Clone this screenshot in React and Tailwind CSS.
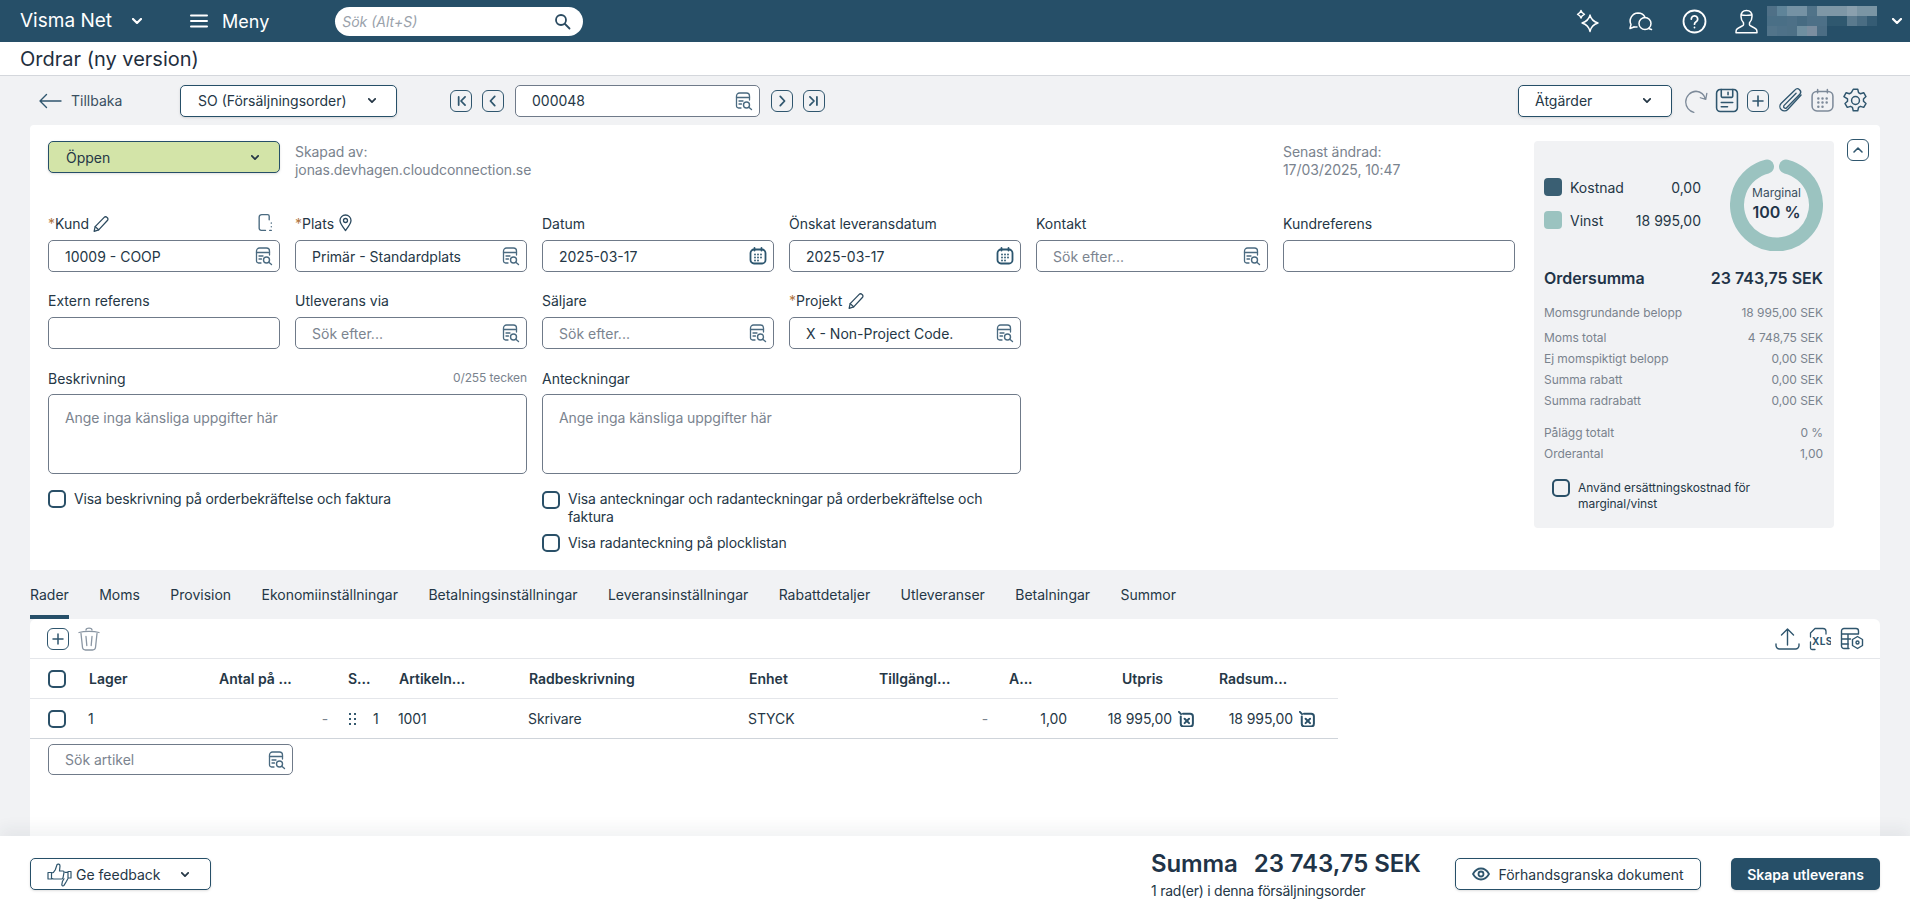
import React from "react";

const Svg = ({ w, h, box, className = "", children }) => (
  <svg
    width={w}
    height={h}
    viewBox={box}
    fill="none"
    stroke="currentColor"
    strokeWidth="1.5"
    strokeLinecap="round"
    strokeLinejoin="round"
    className={"shrink-0 " + className}
  >
    {children}
  </svg>
);

const Chevron = ({ className = "", w = 8, h = 5 }) => (
  <Svg w={w} h={h} box="0 0 10 6" className={className}>
    <path d="M1 1l4 4 4-4" strokeWidth="2.200" />
  </Svg>
);

const Lookup = () => (
  <Svg w={18} h={20} box="0 0 18 20" className="text-[#4a6a80]">
    <path d="M6 17H3.500A2 2 0 0 1 1.500 15V5a3 3 0 0 1 3-3h7a3 3 0 0 1 3 3v4" strokeWidth="1.300" />
    <path d="M1.500 6.500h13M4 10h4M4 13h2.500" strokeWidth="1.300" />
    <circle cx="11.500" cy="14" r="3" strokeWidth="1.400" />
    <path d="M13.800 16.300l2.700 2.200" strokeWidth="1.400" />
  </Svg>
);

const Calendar = ({ size = 18, stroke = "1.800", className = "text-[#2c566f]" }) => (
  <Svg w={size} h={size} box="0 0 18 18" className={className}>
    <rect x="1.500" y="2.500" width="15" height="14" rx="3.500" strokeWidth={stroke} />
    <path d="M5.500 1v2.500M12.500 1v2.500" strokeWidth={stroke} />
    <path d="M6 7.500h.01M9 7.500h.01M12 7.500h.01M6 10.500h.01M9 10.500h.01M12 10.500h.01M6 13.500h.01M9 13.500h.01" strokeWidth="1.800" />
  </Svg>
);

const Pencil = () => (
  <Svg w={18} h={18} box="0 0 16 17" className="text-[#2c4a5f]">
    <path d="M1.500 15.500l1-4.500L11 2.200a1.800 1.800 0 0 1 2.600 0l.4.400a1.800 1.800 0 0 1 0 2.600L5.800 14z" strokeWidth="1.200" />
    <path d="M2.500 11l3.300 3" strokeWidth="1.200" />
  </Svg>
);

const Check = () => (
  <span className="block w-[18px] h-[18px] shrink-0 rounded-[5px] border-2 border-[#2a5068] bg-white"></span>
);

const PanelCheck = () => (
  <span className="block w-[18px] h-[18px] shrink-0 rounded-[5px] border-2 border-[#2a5068]"></span>
);

const Field = ({ label, value, placeholder, icon = "lookup", right }) => (
  <div>
    <div className="h-5 mb-[6px] flex items-center text-[14px] text-[#253746] leading-5">
      {label}
      {right}
    </div>
    <Input value={value} placeholder={placeholder} icon={icon} />
  </div>
);

const Input = ({ value, placeholder, icon = "lookup" }) => (
  <div className="h-8 rounded-[5px] border border-[#6f7a89] bg-white pl-4 pr-[6px] flex items-center justify-between text-[14px]">
    {value ? (
      <span className="text-[#253746]">{value}</span>
    ) : (
      <span className="text-[#7b848f]">{placeholder}</span>
    )}
    {icon === "lookup" && <Lookup />}
    {icon === "date" && <Calendar />}
  </div>
);

const Req = () => <span className="text-[#b0743f]">*</span>;

const NavBtn = ({ d, className = "" }) => (
  <span className={"w-[22px] h-[22px] rounded-[6px] border-[1.5px] border-[#2f566e] flex items-center justify-center text-[#2f566e] " + className}>
    <svg width="14" height="14" viewBox="0 0 12 12" fill="none" stroke="currentColor" strokeWidth="1.500" strokeLinecap="round" strokeLinejoin="round">
      <path d={d} />
    </svg>
  </span>
);

const blurRows = [
  ["bg-[#4f7087]", "bg-[#5f8499]", "bg-[#7592a4]", "bg-[#7592a4]", "bg-[#507389]", "bg-[#7e97a6]", "bg-[#7e97a6]", "bg-[#7e97a6]", "bg-[#8aa0ae]", "bg-[#7a95a4]", "bg-[#7a95a4]"],
  ["bg-[#4a6f86]", "bg-[#4a6f86]", "bg-[#4d7087]", "bg-[#466b82]", "bg-[#4d7087]", "bg-[#4d7087]", "bg-[#2f586f]", "bg-[#2f586f]", "bg-[#5a7a8e]", "bg-[#4a6d83]", "bg-[#355c74]"],
  ["bg-[#52748a]", "bg-[#4e7188]", "bg-[#4d7086]", "bg-[#6f8fa0]", "bg-[#7b8ea0]", "bg-[#4b6d84]"],
];

const tabs = [
  "Moms",
  "Provision",
  "Ekonomiinställningar",
  "Betalningsinställningar",
  "Leveransinställningar",
  "Rabattdetaljer",
  "Utleveranser",
  "Betalningar",
  "Summor",
];

const totals = [
  ["Moms total", "4 748,75 SEK"],
  ["Ej momspiktigt belopp", "0,00 SEK"],
  ["Summa rabatt", "0,00 SEK"],
  ["Summa radrabatt", "0,00 SEK"],
];

const tableCols = "grid grid-cols-[59px_130px_129px_51px_130px_220px_130px_130px_81px_129px_119px] w-[1308px]";

const PriceIcon = () => (
  <Svg w={16} h={16} box="1 1 14.500 14.500" className="text-[#2a5068] ml-[6px]">
    <path d="M5.500 3.500h6.500a2.500 2.500 0 0 1 2.500 2.500v6.500a2.500 2.500 0 0 1-2.500 2.500H6a2.500 2.500 0 0 1-2.500-2.500V6" strokeWidth="1.800" />
    <path d="M1.800 1.800l2 2M7 8l4 4M11 8l-4 4" strokeWidth="1.800" />
  </Svg>
);

export default function App() {
  return (
    <div className="w-[1910px] h-[912px] overflow-hidden flex flex-col bg-[#f1f2f4] font-[Inter,sans-serif] text-[#253746]">
      {/* header */}
      <div className="h-[42px] shrink-0 bg-[#264f68] text-white flex items-center pl-5">
        <span className="text-[19px] w-[95px]">Visma Net</span>
        <Chevron className="ml-[17px]" w={10} h={6} />
        <Svg w={18} h={14} box="0 0 18 14" className="ml-[48px]">
          <path d="M1 1.500h16M1 7h16M1 12.500h16" strokeWidth="2" />
        </Svg>
        <span className="text-[18px] ml-[14px]">Meny</span>
        <div className="ml-[66px] w-[248px] h-[29px] rounded-full bg-white pl-[7px] pr-[12px] flex items-center justify-between">
          <span className="italic text-[14px] text-[#9aa2ab]">Sök (Alt+S)</span>
          <Svg w={17} h={17} box="0 0 17 17" className="text-[#2a4a60]">
            <circle cx="7" cy="7" r="5" strokeWidth="1.800" />
            <path d="M11 11l4.500 4.500" strokeWidth="1.800" />
          </Svg>
        </div>

        <div className="ml-auto flex items-center">
          <Svg w={24} h={24} box="0 0 24 24">
            <path d="M14 6c1 4.500 3 6.500 8 8-5 1.500-7 3.500-8 8.500-1-5-3-7-8-8.500 5-1.500 7-3.500 8-8z" strokeWidth="1.400" />
            <path d="M5 1.500c.5 2 1.200 3 3.500 3.800C6.200 6 5.500 7 5 9c-.5-2-1.200-3-3.500-3.700C3.800 4.500 4.500 3.500 5 1.500z" strokeWidth="1.400" />
          </Svg>
          <Svg w={25} h={24} box="0 0 25 24" className="ml-[28px]">
            <path d="M6 18l-4 1.500 1-4A8 8 0 0 1 10 4c3.500 0 6 1.800 7 4.500" strokeWidth="1.500" />
            <path d="M6 18h3" strokeWidth="1.500" />
            <circle cx="17" cy="14.500" r="6" strokeWidth="1.500" />
            <path d="M20.500 19.500l3 1" strokeWidth="1.500" />
          </Svg>
          <Svg w={25} h={25} box="0 0 25 25" className="ml-[29px]">
            <circle cx="12.500" cy="12.500" r="11" strokeWidth="1.800" />
            <path d="M9.300 10a3.200 3.200 0 1 1 4.800 2.800c-1.100.700-1.600 1.300-1.600 2.400M12.500 18.500v.100" strokeWidth="1.800" />
          </Svg>
          <Svg w={23} h={25} box="0 0 23 25" className="ml-[28px]">
            <path d="M11.500 1.500c3.500 0 5.500 2.500 5.500 6 0 2.800-1.200 5-2.500 6.300v2.200c0 1 5 2 7 4.500.5 1 .5 2 .5 3.200H1c0-1.200 0-2.200.5-3.200 2-2.500 7-3.500 7-4.500v-2.200C7.200 12.500 6 10.300 6 7.500c0-3.500 2-6 5.500-6z" strokeWidth="1.500" />
            <path d="M6.500 6c2.500.5 6.500.5 10 0" strokeWidth="1.300" />
          </Svg>
          <div className="ml-[9px] w-[113px] h-[30px] flex flex-col">
            {blurRows.map((row, i) => (
              <div key={i} className="flex h-[10px]">
                {row.map((c, j) => (
                  <span key={j} className={"block w-[10px] h-[10px] " + c}></span>
                ))}
              </div>
            ))}
          </div>
          <Chevron className="ml-[12px] mr-[8px]" w={10} h={6} />
        </div>
      </div>

      {/* title */}
      <div className="h-[34px] shrink-0 bg-white border-b border-[#d4d7dc] pl-5 flex items-center text-[20px] text-[#1f2f3e]">
        Ordrar (ny version)
      </div>

      {/* toolbar */}
      <div className="h-[49px] shrink-0 flex items-center pl-[38px]">
        <Svg w={24} h={16} box="0 0 24 16" className="text-[#2f566e]">
          <path d="M23 8H2M8.500 1.500L2 8l6.500 6.500" strokeWidth="1.400" />
        </Svg>
        <span className="ml-[9px] text-[14px] text-[#3a4f60] w-[52px]">Tillbaka</span>
        <div className="ml-[57px] w-[217px] h-8 rounded-[5px] border border-[#264f68] bg-white shadow-sm pl-[17px] pr-[20px] flex items-center justify-between text-[14px]">
          <span>SO (Försäljningsorder)</span>
          <Chevron />
        </div>
        <NavBtn d="M4 2.500v7M9.500 2.500L6 6l3.500 3.500" className="ml-[53px]" />
        <NavBtn d="M7.500 2L3.800 6l3.700 4" className="ml-[10px]" />
        <div className="ml-[11px] w-[245px]">
          <div className="h-8 rounded-[5px] border border-[#6f7a89] bg-white pl-4 pr-[6px] flex items-center justify-between text-[14px]">
            <span>000048</span>
            <Lookup />
          </div>
        </div>
        <NavBtn d="M4.500 2L8.200 6l-3.700 4" className="ml-[11px]" />
        <NavBtn d="M2.500 2.500L6 6l-3.500 3.500M8.500 2.500v7" className="ml-[10px]" />

        <div className="ml-[693px] w-[154px] h-8 rounded-[5px] border border-[#264f68] bg-white shadow-sm pl-[16px] pr-[20px] flex items-center justify-between text-[14px]">
          <span>Ätgärder</span>
          <Chevron />
        </div>
        <Svg w={26} h={26} box="0 0 24 24" className="ml-[11px] text-[#7d8a99]">
          <path d="M22 5l-1 5.500-5-1.500M20.800 10.300A10 10 0 0 0 12 3a10 10 0 0 0-9.500 10A10 10 0 0 0 10 22.500" strokeWidth="1.200" />
        </Svg>
        <Svg w={24} h={25} box="0 0 23 24" className="ml-[6px] text-[#2f566e]">
          <path d="M5 1.500h13a3.500 3.500 0 0 1 3.500 3.500v14a3.500 3.500 0 0 1-3.500 3.500H5A3.500 3.500 0 0 1 1.500 19V5A3.500 3.500 0 0 1 5 1.500z" />
          <path d="M6 1.500v6.500a1 1 0 0 0 1 1h9a1 1 0 0 0 1-1V1.500M12.500 4v2.500M6 14h11M6 18h6" />
        </Svg>
        <span className="ml-[8px] w-[22px] h-[22px] rounded-[6px] border-[1.5px] border-[#2f566e] flex items-center justify-center text-[#2f566e]">
          <svg width="12" height="12" viewBox="0 0 12 12" fill="none" stroke="currentColor" strokeWidth="1.600" strokeLinecap="round"><path d="M6 1v10M1 6h10" /></svg>
        </span>
        <Svg w={29} h={29} box="0 0 26 26" className="ml-[7px] text-[#2f566e]">
          <path d="M22.500 8L10.500 21a4 4 0 0 1-6-5.300L17 3.500a2.900 2.900 0 0 1 4.300 3.900L9.500 19.500a1.500 1.500 0 0 1-2.200-2.100L18 6.500" strokeWidth="1.200" />
        </Svg>
        <span className="ml-[5px]">
          <Calendar size={25} stroke="1.100" className="text-[#7d8a99]" />
        </span>
        <Svg w={27} h={27} box="0 0 24 24" className="ml-[7px] text-[#2f566e]">
          <circle cx="12" cy="12" r="3.500" strokeWidth="1.300" />
          <path d="M10 2h4l.7 3 1.700 1 2.900-.9 2 3.400-2.200 2.100v2l2.200 2.100-2 3.400-2.900-.9-1.700 1-.7 3h-4l-.7-3-1.700-1-2.900.9-2-3.400 2.200-2.100v-2L1.700 8.500l2-3.400 2.900.9 1.700-1z" strokeWidth="1.300" />
        </Svg>
      </div>

      {/* form card */}
      <div className="mx-[30px] h-[445px] shrink-0 bg-white rounded-t-[4px] pt-4 pl-[18px] flex items-start">
        <div className="w-[1467px] shrink-0">
          <div className="grid grid-cols-6 gap-x-[15px] h-[73px]">
            <div className="h-8 rounded-[5px] border border-[#264f68] bg-[#d3e4a8] pl-[17px] pr-[20px] flex items-center justify-between text-[14px] shadow-sm">
              <span>Öppen</span>
              <Chevron />
            </div>
            <div className="col-span-2 text-[14px] leading-[18px] tracking-[-0.08px] text-[#7a838e] pt-[2px]">
              <div>Skapad av:</div>
              <div>jonas.devhagen.cloudconnection.se</div>
            </div>
            <div className="col-start-6 text-[14px] leading-[18px] tracking-[-0.08px] text-[#7a838e] pt-[2px]">
              <div>Senast ändrad:</div>
              <div>17/03/2025, 10:47</div>
            </div>
          </div>

          <div className="grid grid-cols-6 gap-x-[15px] gap-y-[19px]">
            <Field
              label={<><Req />Kund<span className="ml-[3px]"><Pencil /></span></>}
              right={
                <Svg w={15} h={19} box="0 0 14 18" className="ml-auto mr-[7px] mb-[3px] text-[#4a6a80]">
                  <path d="M7 16.500H3A2 2 0 0 1 1 14.500V4a2.500 2.500 0 0 1 2.500-2.500H9c1 0 1.500.5 1.500 1.500v3.500M12.500 9.500v.1M12.500 13v.1M11 16.500h1.500" strokeWidth="1.300" />
                </Svg>
              }
              value="10009 - COOP"
            />
            <Field
              label={<><Req />Plats<span className="ml-[5px]"><Svg w={13} h={18} box="0 0 13 18" className="text-[#2c4a5f] mb-[3px]"><path d="M6.500 16.500C3.500 12.500 1 9.500 1 6.500a5.500 5.500 0 0 1 11 0c0 3-2.500 6-5.500 10z" strokeWidth="1.300" /><circle cx="6.500" cy="6.500" r="2" strokeWidth="1.300" /></Svg></span></>}
              value="Primär - Standardplats"
            />
            <Field label="Datum" value="2025-03-17" icon="date" />
            <Field label="Önskat leveransdatum" value="2025-03-17" icon="date" />
            <Field label="Kontakt" placeholder="Sök efter..." />
            <Field label="Kundreferens" icon="none" />

            <Field label="Extern referens" icon="none" />
            <Field label="Utleverans via" placeholder="Sök efter..." />
            <Field label="Säljare" placeholder="Sök efter..." />
            <Field
              label={<><Req />Projekt<span className="ml-[5px]"><Pencil /></span></>}
              value="X - Non-Project Code."
            />
            <div className="col-span-2"></div>

            <div className="col-span-2">
              <div className="h-5 mb-[6px] flex items-center justify-between text-[14px]">
                <span>Beskrivning</span>
                <span className="text-[12px] tracking-[-0.1px] text-[#7a838e]">0/255 tecken</span>
              </div>
              <div className="h-20 rounded-[5px] border border-[#6f7a89] bg-white px-4 pt-[13px] text-[14px] leading-5 tracking-[-0.05px] text-[#7b848f]">
                Ange inga känsliga uppgifter här
              </div>
              <label className="mt-[15px] flex items-center gap-[8px] text-[14px] leading-5 tracking-[-0.11px]">
                <Check />
                Visa beskrivning på orderbekräftelse och faktura
              </label>
            </div>
            <div className="col-span-2">
              <div className="h-5 mb-[6px] flex items-center text-[14px]">Anteckningar</div>
              <div className="h-20 rounded-[5px] border border-[#6f7a89] bg-white px-4 pt-[13px] text-[14px] leading-5 tracking-[-0.05px] text-[#7b848f]">
                Ange inga känsliga uppgifter här
              </div>
              <label className="mt-[16px] flex items-start gap-[8px] text-[14px] leading-[18px] tracking-[-0.11px]">
                <span className="mt-px"><Check /></span>
                Visa anteckningar och radanteckningar på orderbekräftelse och faktura
              </label>
              <label className="mt-[8px] flex items-center gap-[8px] text-[14px] leading-[18px] tracking-[-0.11px]">
                <Check />
                Visa radanteckning på plocklistan
              </label>
            </div>
          </div>
        </div>

        {/* summary panel */}
        <div className="ml-[19px] w-[300px] h-[387px] shrink-0 rounded-[4px] bg-[#f1f2f4] pl-[10px] pr-[11px] pt-[17px]">
          <div className="flex items-start h-[92px]">
            <div className="w-[157px] pt-5 text-[14px]">
              <div className="flex items-center h-[18px]">
                <span className="w-[18px] h-[18px] rounded-[4px] bg-[#3a5f73]"></span>
                <span className="ml-[8px]">Kostnad</span>
                <span className="ml-auto">0,00</span>
              </div>
              <div className="flex items-center h-[18px] mt-[15px]">
                <span className="w-[18px] h-[18px] rounded-[4px] bg-[#9bc3c0]"></span>
                <span className="ml-[8px]">Vinst</span>
                <span className="ml-auto">18 995,00</span>
              </div>
            </div>
            <div className="relative ml-[29px] w-[93px] h-[93px]">
              <svg width="93" height="93" viewBox="0 0 93 93" fill="none">
                <path d="M56 8.600A39.500 39.500 0 1 1 37 8.600" stroke="#9bc3c0" strokeWidth="14" strokeLinecap="round" />
              </svg>
              <div className="absolute inset-0 flex flex-col items-center justify-center pb-[3px]">
                <span className="text-[12px] leading-[18px] text-[#3a4f60]">Marginal</span>
                <span className="text-[16px] leading-[20px] font-semibold text-[#1f3448]">100 %</span>
              </div>
            </div>
          </div>

          <div className="mt-4 h-6 flex items-center justify-between text-[16px] font-semibold text-[#1f3448]">
            <span>Ordersumma</span>
            <span>23 743,75 SEK</span>
          </div>

          <div className="mt-3 text-[12px] leading-[21px] tracking-[-0.05px] text-[#7a838e]">
            <div className="flex justify-between mb-1">
              <span>Momsgrundande belopp</span>
              <span>18 995,00 SEK</span>
            </div>
            {totals.map(([label, value]) => (
              <div key={label} className="flex justify-between">
                <span>{label}</span>
                <span>{value}</span>
              </div>
            ))}
            <div className="flex justify-between mt-[11px]">
              <span>Pålägg totalt</span>
              <span>0 %</span>
            </div>
            <div className="flex justify-between">
              <span>Orderantal</span>
              <span>1,00</span>
            </div>
          </div>

          <label className="mt-[15px] ml-[8px] flex items-start gap-[8px] text-[12px] leading-4 tracking-[-0.05px]">
            <PanelCheck />
            <span className="w-[200px] pt-px">Använd ersättningskostnad för marginal/vinst</span>
          </label>
        </div>

        <span className="ml-[13px] w-[22px] h-[22px] -mt-[2px] rounded-[6px] border-[1.5px] border-[#2f566e] flex items-center justify-center text-[#2f566e]">
          <svg width="12" height="8" viewBox="0 0 12 8" fill="none" stroke="currentColor" strokeWidth="1.600" strokeLinecap="round" strokeLinejoin="round"><path d="M2 6l4-4 4 4" /></svg>
        </span>
      </div>

      {/* tabs */}
      <div className="h-[49px] shrink-0 pl-[30px] flex items-end text-[14px] gap-[30.4px]">
        <div className="h-[49px] pt-[15px] leading-5 border-b-4 border-[#264f68]">Rader</div>
        {tabs.map((t) => (
          <div key={t} className="h-[49px] pt-[15px] leading-5">{t}</div>
        ))}
      </div>

      {/* grid card */}
      <div className="mx-[30px] h-[217px] shrink-0 bg-white rounded-t-[6px]">
        <div className="h-10 border-b border-[#e4e6ea] pl-[17px] pr-[16px] flex items-center">
          <span className="w-[22px] h-[22px] rounded-[6px] border-[1.5px] border-[#2f566e] flex items-center justify-center text-[#2f566e]">
            <svg width="12" height="12" viewBox="0 0 12 12" fill="none" stroke="currentColor" strokeWidth="1.500" strokeLinecap="round"><path d="M6 1v10M1 6h10" /></svg>
          </span>
          <Svg w={22} h={26} box="0 0 22 25" className="ml-[9px] text-[#8a96a3]">
            <path d="M1 6c5-1.500 15-1.500 20 0M8 3.500c0-2.500 6-2.500 6 0" strokeWidth="1.300" />
            <path d="M3 7l1.500 14c.2 1.500 1.500 2.500 3 2.500h7c1.500 0 2.800-1 3-2.500L19 7M8 10l.8 9M14 10l-.8 9" strokeWidth="1.300" />
          </Svg>
          <div className="ml-auto flex items-center text-[#2f566e]">
            <Svg w={25} h={24} box="0 0 25 24">
              <path d="M12.500 18V2M6.500 8l6-6 6 6M1 17v1.500A3.500 3.500 0 0 0 4.500 22h16a3.500 3.500 0 0 0 3.500-3.500V17" strokeWidth="1.400" />
            </Svg>
            <Svg w={22} h={24} box="0 0 22 24" className="ml-[9px]">
              <path d="M1.500 10V6L6 1.500h8A3 3 0 0 1 17 4.500V7M1.500 15v6A1.500 1.500 0 0 0 3 22.500h3" strokeWidth="1.300" />
              <text x="3" y="18" fontSize="10" fontWeight="700" fontFamily="Inter, sans-serif" stroke="none" fill="currentColor" letterSpacing="0.300">XLS</text>
            </Svg>
            <Svg w={24} h={23} box="0 0 24 23" className="ml-[9px]">
              <path d="M9 21.500H4A2.500 2.500 0 0 1 1.500 19V4A2.500 2.500 0 0 1 4 1.500h12A2.500 2.500 0 0 1 18.500 4v3M1.500 7h17M1.500 12h9M1.500 17h7M8 7v14" strokeWidth="1.400" />
              <path d="M17.500 9.500l5 3v6l-5 3-5-3v-6z" strokeWidth="1.400" />
              <circle cx="17.500" cy="15.500" r="1.500" strokeWidth="1.400" />
            </Svg>
          </div>
        </div>

        <div className={tableCols + " h-10 border-b border-[#e4e6ea] items-center text-[14px] font-semibold text-[#253746]"}>
          <div className="pl-[18px]"><Check /></div>
          <div>Lager</div>
          <div>Antal på ...</div>
          <div>S...</div>
          <div>Artikeln...</div>
          <div>Radbeskrivning</div>
          <div>Enhet</div>
          <div>Tillgängl...</div>
          <div>A...</div>
          <div className="text-right pr-[56px]">Utpris</div>
          <div>Radsum...</div>
        </div>
        <div className={tableCols + " h-10 border-b border-[#cfd4da] items-center text-[14px] tracking-[-0.1px]"}>
          <div className="pl-[18px]"><Check /></div>
          <div className="-ml-px">1</div>
          <div className="text-right pr-5 text-[#7a838e]">-</div>
          <div className="flex items-center pl-[1px]">
            <svg width="8" height="14" viewBox="0 0 8 14" fill="#35596f">
              <rect x="0" y="1" width="2" height="2" /><rect x="5" y="1" width="2" height="2" />
              <rect x="0" y="6" width="2" height="2" /><rect x="5" y="6" width="2" height="2" />
              <rect x="0" y="11" width="2" height="2" /><rect x="5" y="11" width="2" height="2" />
            </svg>
            <span className="ml-[16px]">1</span>
          </div>
          <div className="-ml-px">1001</div>
          <div className="-ml-px">Skrivare</div>
          <div className="-ml-px">STYCK</div>
          <div className="text-right pr-[21px] text-[#7a838e]">-</div>
          <div className="text-right pr-[23px]">1,00</div>
          <div className="flex items-center justify-end pr-[25px]">18 995,00<PriceIcon /></div>
          <div className="flex items-center justify-end pr-[23px]">18 995,00<PriceIcon /></div>
        </div>
        <div className="ml-[18px] mt-[5px] w-[245px] h-[31px] rounded-[5px] border border-[#6f7a89] pl-4 pr-[6px] flex items-center justify-between text-[14px] text-[#7b848f]">
          <span>Sök artikel</span>
          <Lookup />
        </div>
      </div>

      {/* footer */}
      <div className="h-[76px] shrink-0 bg-white shadow-[0_-8px_14px_rgba(30,50,70,0.06)] relative pl-[30px] pr-[30px] flex items-start pt-[22px]">
        <div className="w-[181px] h-8 rounded-[5px] border border-[#264f68] bg-white shadow-sm pl-[16px] pr-[21px] flex items-center text-[14px]">
          <Svg w={25} h={25} box="0 0 25 25" className="text-[#2f566e]">
            <path d="M1 10.500h3.500v6.500H1zM4.500 11c1.800-.3 3-1.500 3.800-3.300l1.700-5c.8-1.200 3-.7 3 1.200L12.500 9H16c.8 0 1.200.6 1 1.400l-1 5.600c-.2.700-.7 1-1.300 1H7c-1 0-1.700-.3-2.500-.8" strokeWidth="1.200" />
            <path d="M24 9.500h-3v6.500h3zM21 10.300h-3M17 16.800l-1.600 2.700-.6 3.300c.3 1.200 1.400 1.400 2.200.6l2.500-4.200c.3-.7.900-1.700 1.500-2.700" strokeWidth="1.200" />
          </Svg>
          <span className="ml-[4px]">Ge feedback</span>
          <Chevron className="ml-auto" />
        </div>
        <div className="ml-[940px] -mt-[8px]">
          <div className="flex items-center h-7 text-[24px] font-semibold tracking-[-0.1px] text-[#1f3448]">
            <span>Summa</span>
            <span className="ml-[16px]">23 743,75 SEK</span>
          </div>
          <div className="text-[14px] leading-5 tracking-[-0.25px] mt-[3px]">1 rad(er) i denna försäljningsorder</div>
        </div>
        <div className="ml-auto flex items-center">
          <div className="w-[246px] h-8 rounded-[5px] border border-[#264f68] bg-white shadow-sm flex items-center justify-center text-[14px]">
            <Svg w={18} h={14} box="0 0 18 14" className="text-[#2f566e] mr-2">
              <path d="M1 7c2-3.500 5-5.500 8-5.500S15 3.500 17 7c-2 3.500-5 5.500-8 5.500S3 10.500 1 7z" strokeWidth="1.800" />
              <circle cx="9" cy="7" r="2.500" strokeWidth="1.800" />
            </Svg>
            Förhandsgranska dokument
          </div>
          <div className="ml-[30px] w-[149px] h-8 rounded-[5px] bg-[#264f68] shadow-sm flex items-center justify-center text-[14px] font-semibold text-white">
            Skapa utleverans
          </div>
        </div>
      </div>
    </div>
  );
}
